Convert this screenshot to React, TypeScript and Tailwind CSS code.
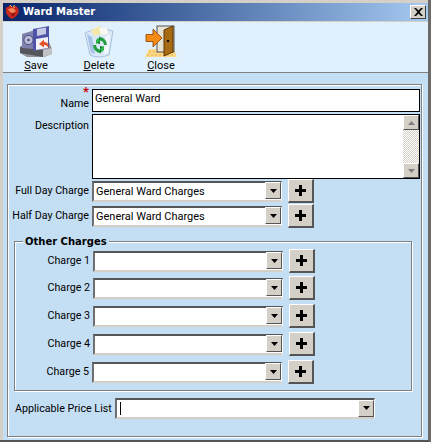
import React from "react";

const labelCls = "text-[10.7px] text-black whitespace-nowrap text-right";

const Plus = ({ cls = "" }: { cls?: string }) => (
  <button className={`w-[26px] h-[24px] shrink-0 bg-[#d4d0c8] border-t border-l border-t-white border-l-white border-r-2 border-b-2 border-r-[#555555] border-b-[#555555] flex items-center justify-center ${cls}`}>
    <svg width="11" height="11" viewBox="0 0 11 11"><path d="M4 0h3v4h4v3H7v4H4V7H0V4h4z" fill="#000" /></svg>
  </button>
);

const Arrow = () => (
  <svg width="7" height="4" viewBox="0 0 7 4"><path d="M0 0h7L3.500 4z" fill="#000" /></svg>
);

const Combo = ({ w = "w-[190px]", value = "", caret = false }: { w?: string; value?: string; caret?: boolean }) => (
  <div className={`${w} h-[21px] shrink-0 bg-white border-t-2 border-l-2 border-t-[#555555] border-l-[#6f6f6f] border-r border-b-2 border-r-white border-b-[#d4d0c8] flex items-center justify-between`}>
    <span className="pl-[2px] leading-[17px] text-black whitespace-pre flex items-center">
      {caret && <span className="w-px h-[13px] bg-black ml-px" />}
      {value}
    </span>
    <span className="w-[16px] h-[17px] mb-px bg-[#d4d0c8] border-t border-l border-t-white border-l-white border-r border-b border-r-[#555555] border-b-[#555555] flex items-center justify-center">
      <Arrow />
    </span>
  </div>
);

const Row = ({ label, value, cls = "", labelW = "w-[81px]" }: { label: string; value?: string; cls?: string; labelW?: string }) => (
  <div className={`flex items-center h-[24px] ${cls}`}>
    <span className={`${labelW} shrink-0 ${labelCls}`}>{label}</span>
    <Combo value={value} w="w-[190px] ml-[3px]" />
    <Plus cls="ml-[6px]" />
  </div>
);

const Tool = ({ first, rest, children, cls = "" }: { first: string; rest: string; children: React.ReactNode; cls?: string }) => (
  <div className={`w-[48px] flex flex-col items-center ${cls}`}>
    <div className="w-[34px] h-[33px] flex items-center justify-center">{children}</div>
    <div className="text-black leading-[14px] mt-px"><span className="underline">{first}</span>{rest}</div>
  </div>
);

const SaveIcon = () => (
  <svg width="34" height="33" viewBox="0 0 34 33">
    <path d="M1 22 L7 17 H30 L33 24 V29 L25 32 H8 L1 28z" fill="#8f8f95" />
    <path d="M1 22 L24 25 V32 L1 28z" fill="#55555c" />
    <path d="M24 25 L33 23 V29 L24 32z" fill="#c2c2c6" />
    <path d="M3 9 L16 5 V24 L3 23z" fill="#7f82ad" />
    <circle cx="9.500" cy="15" r="4.600" fill="#bcbed8" stroke="#45487a" />
    <circle cx="9.500" cy="15" r="1.300" fill="#45487a" />
    <path d="M14 4 L30 1 V23 L14 26z" fill="#4f54a8" />
    <path d="M18 4 L27 2.500 V9 L18 11z" fill="#c8cbe6" />
    <path d="M17 14 L29 12 V23 L17 25z" fill="#f4f4f8" />
    <path d="M20 19 L25 14.500 V17 Q30 16.500 29.500 23 Q28 19.500 25 20 V22.500z" fill="#e8542a" />
  </svg>
);

const DeleteIcon = () => (
  <svg width="30" height="33" viewBox="0 0 30 33">
    <path d="M1 8 Q14 1 29 6 L25 30 Q15 34 6 30z" fill="#dbe8f7" stroke="#a9c2de" />
    <path d="M7 5 L16 1 L20 8 L10 11z" fill="#f6e8a8" />
    <path d="M15 3 L23 3 L24 9 L17 10z" fill="#f8f8ee" />
    <path d="M3 9 L7 28 L11 29 L8 12z" fill="#a9c3e6" />
    <path d="M21 12 L26 9 L24 28 L20 29z" fill="#f2f7fd" />
    <path d="M16 12 A7.500 8.500 0 0 1 23 20 L20 20 A4.500 5 0 0 0 16 15.500z" fill="#1f9e3b" />
    <path d="M16 28 A7.500 8.500 0 0 1 9 20 L12 20 A4.500 5 0 0 0 16 24.500z" fill="#1f9e3b" />
    <path d="M12 18 L16 11 L16 19z M20 22 L16 29 L16 21z" fill="#137a2b" />
    <path d="M12 15 L14 13 L16 16 L12 19z M20 25 L18 27 L16 24 L20 21z" fill="#2bb84a" />
  </svg>
);

const CloseIcon = () => (
  <svg width="33" height="33" viewBox="0 0 33 33">
    <path d="M0 32 L4 24 H29 L32 32z" fill="#fbd98a" />
    <path d="M2 30h28M4 27h24" stroke="#f0a83c" strokeDasharray="2 2" />
    <rect x="12" y="1" width="17" height="26" fill="#e8e2d2" stroke="#555" />
    <path d="M19 5 L28 1 V27 L19 31z" fill="#a96a14" stroke="#5a3608" />
    <circle cx="23" cy="16" r="1.300" fill="#111" />
    <path d="M1 9.500 H8 V4 L17 13 L8 22 V16.500 H1z" fill="#f58a14" stroke="#8a3f00" strokeWidth="0.8" />
  </svg>
);

const Heart = () => (
  <svg width="15" height="16" viewBox="0 0 15 16">
    <path d="M1 6 Q0 3 3 3 L5 1 L7 3 Q10 1 12 3 Q15 6 13 10 Q10 14 7 15 Q3 13 1 9z" fill="#c8281e" />
    <path d="M3 5 L8 4 L11 7 L8 9 L5 8z" fill="#f08a5a" />
    <path d="M6 10 L10 9 L8 13z" fill="#7a1410" />
    <path d="M5 1 L7 3 M9 1 L9 4" stroke="#e8c070" />
  </svg>
);

export default function App() {
  return (
    <div className="w-[431px] h-[442px] bg-[#d4d0c8] border-r-[3px] border-b-2 border-r-[#6a6a6a] border-b-[#555555] pl-[3px] pt-[3px] flex flex-col text-[11px] leading-[14px] overflow-hidden" style={{ fontFamily: 'Roboto, Arial, sans-serif' }}>
      <div className="h-[18px] shrink-0 bg-gradient-to-r from-[#0a246a] to-[#a6caf0] flex items-center pl-[2px] pr-[2px]">
        <Heart />
        <span className="ml-[3px] text-white font-bold text-[10px]" style={{ fontFamily: '"DejaVu Sans", sans-serif' }}>Ward Master</span>
        <button className="ml-auto w-[16px] h-[14px] bg-[#d4d0c8] border-t border-l border-t-white border-l-white border-r border-b border-r-[#404040] border-b-[#404040] flex items-center justify-center">
          <svg width="9" height="8" viewBox="0 0 9 8"><path d="M0 0h2l2.500 2.500L7 0h2L5.500 4 9 8H7L4.500 5.500 2 8H0l3.500-4z" fill="#000" /></svg>
        </button>
      </div>
      <div className="h-[51px] shrink-0 mt-px bg-[#e0f1fd] border-b border-b-[#808080] flex pl-[9px] pt-[3px]">
        <Tool first="S" rest="ave"><SaveIcon /></Tool>
        <Tool first="D" rest="elete" cls="ml-[15px]"><DeleteIcon /></Tool>
        <Tool first="C" rest="lose" cls="ml-[14px]"><CloseIcon /></Tool>
      </div>
      <div className="flex-1 bg-[#c4dff4] pl-[4px] pr-[6px] pt-[11px] pb-[3px] flex flex-col">
        <div className="flex-1 border border-[#808080] shadow-[inset_1px_1px_0_#ffffff,1px_1px_0_#ffffff] pt-[4px] flex flex-col">
          <div className="flex h-[23px]">
            <span className={`w-[81px] self-end pb-px relative ${labelCls}`}>
              Name
              <span className="absolute right-0 -top-[8px] text-[#cc0000] font-bold text-[13px] leading-[6px]">*</span>
            </span>
            <div className="ml-[3px] w-[328px] h-[23px] bg-white border border-black pl-[2px] pt-[2px] text-black">General Ward</div>
          </div>
          <div className="flex mt-[2px] h-[65px]">
            <span className={`w-[81px] pt-[5px] ${labelCls}`}>Description</span>
            <div className="ml-[3px] w-[328px] bg-white border border-black flex justify-end">
              <div className="w-[16px] h-full flex flex-col bg-[repeating-conic-gradient(#d4d0c8_0_25%,#ffffff_0_50%)] bg-[length:2px_2px]">
                <span className="h-[15px] bg-[#d4d0c8] border-t border-l border-t-white border-l-white border-r border-b border-r-[#555555] border-b-[#555555] flex items-center justify-center">
                  <svg width="7" height="4" viewBox="0 0 7 4"><path d="M3.500 0L7 4H0z" fill="#808080" /></svg>
                </span>
                <span className="h-[15px] mt-auto bg-[#d4d0c8] border-t border-l border-t-white border-l-white border-r border-b border-r-[#555555] border-b-[#555555] flex items-center justify-center">
                  <svg width="7" height="4" viewBox="0 0 7 4"><path d="M0 0h7L3.500 4z" fill="#808080" /></svg>
                </span>
              </div>
            </div>
          </div>
          <Row label="Full Day Charge" value="General Ward Charges" />
          <Row label="Half Day Charge" value="General Ward Charges" cls="mt-px" />
          <div className="ml-[6px] mr-[9px] mt-[13px] h-[150px] border border-[#808080] shadow-[inset_1px_1px_0_#ffffff,1px_1px_0_#ffffff] flex flex-col">
            <span className="ml-[8px] -mt-[7px] h-[14px] px-[2px] w-fit bg-[#c4dff4] font-bold text-black text-[10px]" style={{ fontFamily: '"DejaVu Sans", sans-serif' }}>Other Charges</span>
            <div className="flex flex-col pl-[1px]">
              <Row label="Charge 1" labelW="w-[74px]" />
              <Row label="Charge 2" labelW="w-[74px]" cls="mt-[3px]" />
              <Row label="Charge 3" labelW="w-[74px]" cls="mt-[4px]" />
              <Row label="Charge 4" labelW="w-[74px]" cls="mt-[4px]" />
              <Row label="Charge 5" labelW="w-[73px]" cls="mt-[4px]" />
            </div>
          </div>
          <div className="flex items-center mt-[7px] ml-[7px]">
            <span className={`w-[96px] shrink-0 text-left ${labelCls}`}>Applicable Price List</span>
            <Combo w="w-[260px] ml-[4px]" caret />
          </div>
        </div>
      </div>
    </div>
  );
}
